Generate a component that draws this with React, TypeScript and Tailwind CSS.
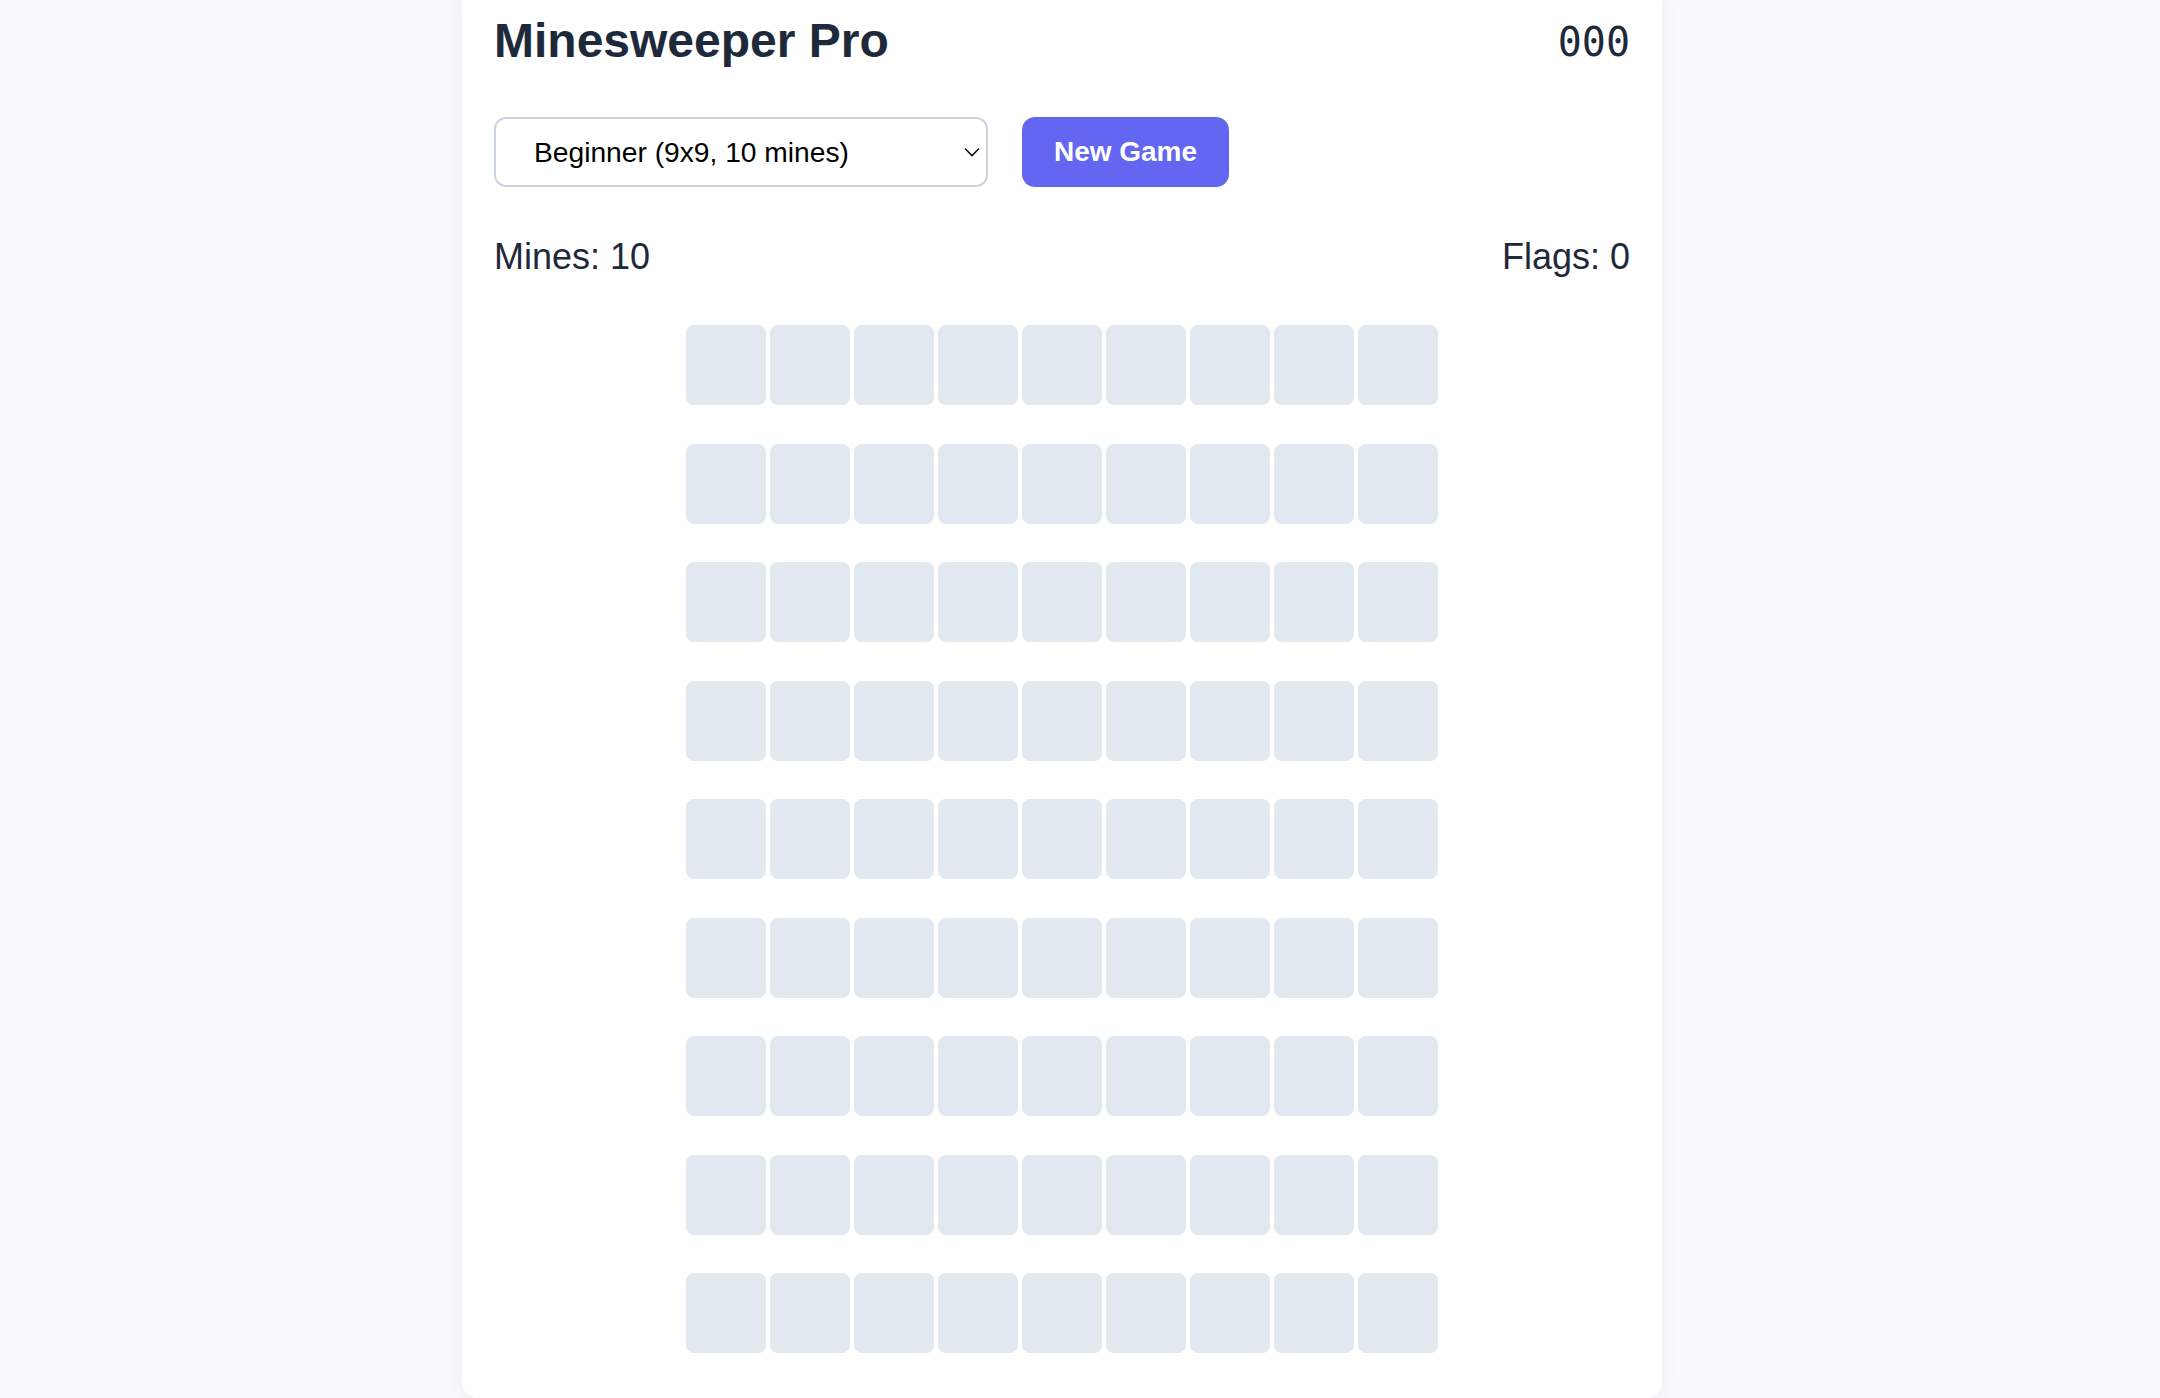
import { useState } from "react";

const LEVELS = [
  { id: "beginner", label: "Beginner (9x9, 10 mines)", rows: 9, cols: 9, mines: 10 },
  { id: "intermediate", label: "Intermediate (16x16, 40 mines)", rows: 16, cols: 16, mines: 40 },
  { id: "expert", label: "Expert (16x30, 99 mines)", rows: 16, cols: 30, mines: 99 },
];

export default function App() {
  const [level, setLevel] = useState("beginner");
  const [flags] = useState(0);
  const [time] = useState(0);
  const cfg = LEVELS[0];

  return (
    <div className="min-h-screen bg-[#f9fafb] flex justify-center pr-[36px] font-['Liberation_Sans',Arial,sans-serif] text-[#1e293b]">
      <main className="w-[1200px] mt-[-15px] bg-white rounded-2xl shadow-[0_2px_20px_rgba(15,23,42,0.06)] px-8 pt-8 pb-10">
        <header className="flex items-center justify-between h-[48px]">
          <h1 className="text-[48px] leading-[48px] font-bold">Minesweeper Pro</h1>
          <span className="font-['DejaVu_Sans_Mono',monospace] font-medium text-[40px] leading-[40px] mt-[1px]">
            {String(time).padStart(3, "0")}
          </span>
        </header>

        <div className="flex items-center gap-[34px] mt-[52px]">
          <div className="relative">
            <select
              value={level}
              onChange={(e) => setLevel(e.target.value)}
              className="appearance-none w-[494px] h-[70px] border-2 border-[#cbd5e1] rounded-[12px] bg-white pl-[38px] text-[28.2px] text-black outline-none"
            >
              {LEVELS.map((l) => (
                <option key={l.id} value={l.id}>
                  {l.label}
                </option>
              ))}
            </select>
            <svg
              className="absolute right-[8px] top-[30px] pointer-events-none"
              width="16"
              height="10"
              viewBox="0 0 16 10"
              fill="none"
              stroke="#111"
              strokeWidth="1.6"
            >
              <polyline points="1,1.5 8,8.5 15,1.5" />
            </svg>
          </div>
          <button className="h-[70px] w-[207px] rounded-[13px] bg-[#6366f1] text-white text-[28px] font-bold">
            New Game
          </button>
        </div>

        <div className="flex justify-between mt-[52px] text-[36px] leading-[36px]">
          <span>Mines: {cfg.mines}</span>
          <span>Flags: {flags}</span>
        </div>

        <div className="flex flex-col items-center gap-[38.5px] mt-[50px]">
          {Array.from({ length: cfg.rows }).map((_, r) => (
            <div key={r} className="flex gap-[4px]">
              {Array.from({ length: cfg.cols }).map((_, c) => (
                <button key={c} className="w-[80px] h-[80px] rounded-[8px] bg-[#e2e8f0]" />
              ))}
            </div>
          ))}
        </div>
      </main>
    </div>
  );
}
